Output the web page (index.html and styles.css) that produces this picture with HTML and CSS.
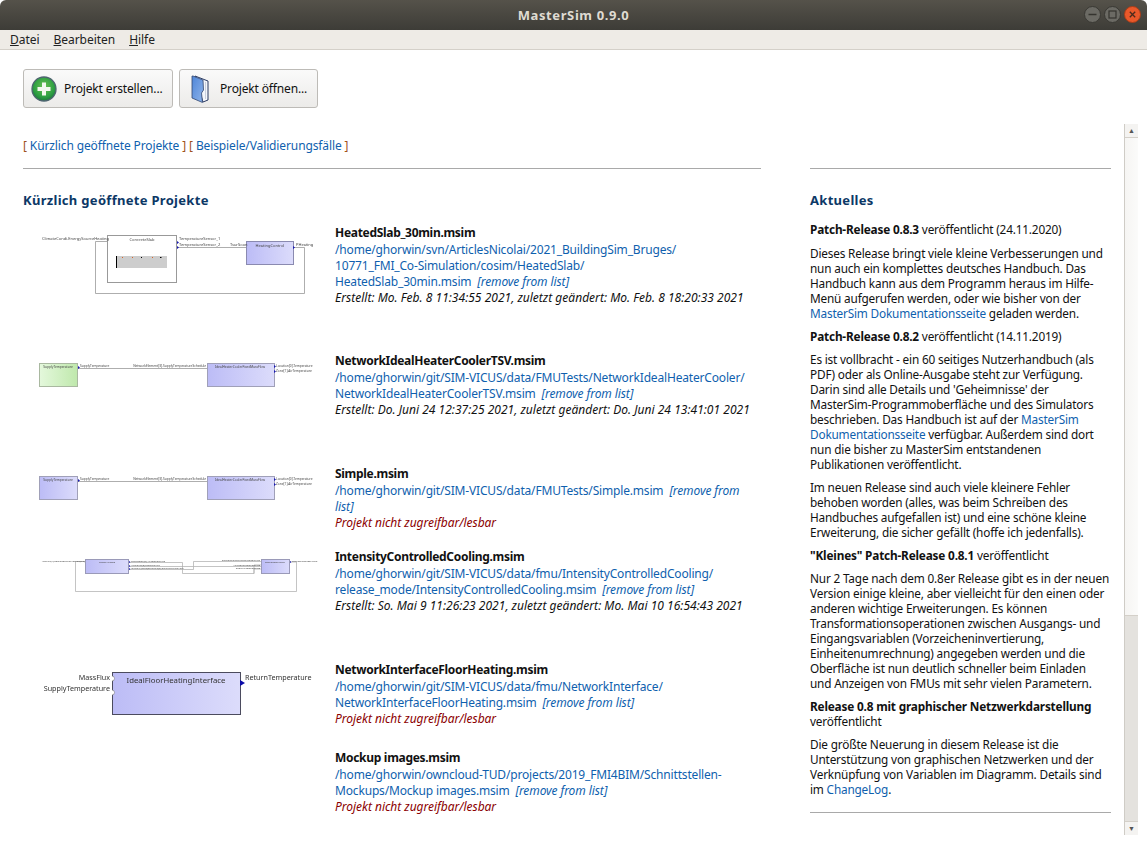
FILE: index.html
```html
<!DOCTYPE html>
<html>
<head>
    <meta charset="UTF-8">
    <title>MasterSim 0.9.0</title>
    <link rel="stylesheet" href="styles.css">
</head>
<body>
<div class="titlebar">
    <span class="title">MasterSim 0.9.0</span>
    <div class="winbuttons">
        <svg class="winbtn" width="17" height="17" viewBox="0 0 17 17"><circle cx="8.5" cy="8.5" r="8" fill="#6b6a64" stroke="#3a3934"/><path d="M4.5 8.5h8" stroke="#35342f" stroke-width="1.5"/></svg>
        <svg class="winbtn" width="17" height="17" viewBox="0 0 17 17"><circle cx="8.5" cy="8.5" r="8" fill="#6b6a64" stroke="#3a3934"/><rect x="5" y="5" width="7" height="7" fill="none" stroke="#35342f" stroke-width="1.2"/></svg>
        <svg class="winbtn" width="17" height="17" viewBox="0 0 17 17"><circle cx="8.5" cy="8.5" r="8" fill="#e9582a" stroke="#a83d18"/><path d="M5.8 5.8l5.4 5.4M11.2 5.8l-5.4 5.4" stroke="#4a2a1c" stroke-width="1.3"/></svg>
    </div>
</div>
<div class="menubar">
    <span class="menu"><u>D</u>atei</span>
    <span class="menu"><u>B</u>earbeiten</span>
    <span class="menu"><u>H</u>ilfe</span>
</div>
<div class="toolbar">
    <button class="toolbtn btn-new">
        <svg width="26" height="26" viewBox="0 0 26 26">
            <defs><radialGradient id="greenball" cx="50%" cy="40%" r="60%"><stop offset="0" stop-color="#6cc04f"/><stop offset="0.7" stop-color="#2ea043"/><stop offset="1" stop-color="#1c7a3a"/></radialGradient></defs>
            <circle cx="13" cy="13" r="12" fill="url(#greenball)" stroke="#4f6570" stroke-width="1.3"/>
            <path d="M13 6.500v13M6.500 13h13" stroke="#f2f8ee" stroke-width="4"/>
        </svg>
        <span>Projekt erstellen...</span>
    </button>
    <button class="toolbtn btn-open">
        <svg width="18" height="28" viewBox="0 0 18 28">
            <path d="M4 1 L17 6 L17 25 L12 27 Z" fill="#f4f6fa" stroke="#2d3c63" stroke-width="1"/>
            <path d="M14.500 7 V24" stroke="#c9d0de"/>
            <path d="M1 1 Q1 1 2 1 L12 5 L12.500 15 L10.500 18 L11.500 27.500 L1 23 Z" fill="url(#cover)" stroke="#33466f" stroke-width="0.8"/>
        </svg>
        <span>Projekt öffnen...</span>
    </button>
</div>
<div class="browser">
    <div class="content">
        <div class="tabs">
            <span class="bracket">[</span> <a>Kürzlich geöffnete Projekte</a> <span class="bracket">]</span>
            <span class="bracket">[</span> <a>Beispiele/Validierungsfälle</a> <span class="bracket">]</span>
        </div>
        <div class="columns">
            <div class="projects">
                <hr>
                <h2>Kürzlich geöffnete Projekte</h2>
                <div class="project-list">
                    <svg class="thumb" viewBox="23 225 312 128">
                        <rect x="107.500" y="235.500" width="69" height="47" fill="#fff" stroke="#999"/>
                        <rect x="116" y="256" width="51" height="12" fill="#cdcdcd"/>
                        <path d="M116.500 256v12" stroke="#000"/>
                        <path d="M122 257.500h1M132 257.500h1M152 257.500h1" stroke="#d9662a"/>
                        <path d="M141 257.500h1M160 257.500h1.500" stroke="#000"/>
                        <rect x="246.500" y="241.500" width="47" height="23" fill="url(#blue1)" stroke="#8a8ab0"/>
                        <path d="M177 247.500H246M293 247.500H304.500V293.500H95.500V241.500H107" fill="none" stroke="#999" stroke-width="0.8"/>
                        <path d="M177 241v3l2-1.500zM177 246v3l2-1.500zM293 246v3l2-1.500z" fill="#1a1ab0"/>
                        <text x="42" y="240" class="t4">ClimateCondi.EnergySourceHeating</text>
                        <text x="142" y="241" class="t4" text-anchor="middle">ConcreteSlab</text>
                        <text x="179" y="240" class="t4">TemperatureSensor_1</text>
                        <text x="179" y="246" class="t4">TemperatureSensor_2</text>
                        <text x="230" y="246" class="t4">TsurSoon</text>
                        <text x="270" y="247" class="t4" text-anchor="middle">HeatingControl</text>
                        <text x="296" y="246" class="t4">PHeating</text>
                    </svg>
                    <div class="project">
                        <div class="pname">HeatedSlab_30min.msim</div>
                        <a>/home/ghorwin/svn/ArticlesNicolai/2021_BuildingSim_Bruges/<br>10771_FMI_Co-Simulation/cosim/HeatedSlab/<br>HeatedSlab_30min.msim</a> <a class="remove">[remove from list]</a>
                        <div class="meta">Erstellt: Mo. Feb. 8 11:34:55 2021, zuletzt geändert: Mo. Feb. 8 18:20:33 2021</div>
                    </div>

                    <svg class="thumb" viewBox="23 353 312 113">
                        <rect x="39.500" y="363.500" width="38" height="23" fill="url(#green1)" stroke="#a9b8a0"/>
                        <rect x="207.500" y="363.500" width="67" height="23" fill="url(#blue1)" stroke="#a0a0b8"/>
                        <path d="M78 368.500H207" stroke="#999" stroke-width="0.8"/>
                        <path d="M78 366v3l2-1.500zM274 365v3l2-1.500zM274 370v3l2-1.500z" fill="#1a1ab0"/>
                        <text x="58" y="367.500" class="t3" text-anchor="middle">SupplyTemperature</text>
                        <text x="80" y="367" class="t3">SupplyTemperature</text>
                        <text x="206" y="367" class="t3" text-anchor="end">NetworkElement[3].SupplyTemperatureSchedule</text>
                        <text x="240" y="367.500" class="t3" text-anchor="middle">IdealHeaterCoolerFixedMassFlow</text>
                        <text x="276" y="367" class="t3">Location[0].Temperature</text>
                        <text x="276" y="372" class="t3">Zone[1].AirTemperature</text>
                    </svg>
                    <div class="project">
                        <div class="pname">NetworkIdealHeaterCoolerTSV.msim</div>
                        <a>/home/ghorwin/git/SIM-VICUS/data/FMUTests/NetworkIdealHeaterCooler/<br>NetworkIdealHeaterCoolerTSV.msim</a> <a class="remove">[remove from list]</a>
                        <div class="meta">Erstellt: Do. Juni 24 12:37:25 2021, zuletzt geändert: Do. Juni 24 13:41:01 2021</div>
                    </div>

                    <svg class="thumb" viewBox="23 466 312 83">
                        <rect x="39.500" y="476.500" width="38" height="23" fill="url(#blue1)" stroke="#a0a0b8"/>
                        <rect x="207.500" y="476.500" width="67" height="23" fill="url(#blue1)" stroke="#a0a0b8"/>
                        <path d="M78 481.500H207" stroke="#999" stroke-width="0.8"/>
                        <path d="M78 479v3l2-1.500zM274 478v3l2-1.500zM274 483v3l2-1.500z" fill="#1a1ab0"/>
                        <text x="58" y="480.500" class="t3" text-anchor="middle">SupplyTemperature</text>
                        <text x="80" y="480" class="t3">SupplyTemperature</text>
                        <text x="206" y="480" class="t3" text-anchor="end">NetworkElement[3].SupplyTemperatureSchedule</text>
                        <text x="240" y="480.500" class="t3" text-anchor="middle">IdealHeaterCoolerFixedMassFlow</text>
                        <text x="276" y="480" class="t3">Location[0].Temperature</text>
                        <text x="276" y="485" class="t3">Zone[1].AirTemperature</text>
                    </svg>
                    <div class="project">
                        <div class="pname">Simple.msim</div>
                        <a>/home/ghorwin/git/SIM-VICUS/data/FMUTests/Simple.msim</a> <a class="remove">[remove from<br>list]</a>
                        <div class="error">Projekt nicht zugreifbar/lesbar</div>
                    </div>

                    <svg class="thumb" viewBox="23 549 312 113">
                        <rect x="85.500" y="559.500" width="43" height="14" fill="url(#blue1)" stroke="#9a9ab8"/>
                        <rect x="261.500" y="559.500" width="28" height="14" fill="url(#blue1)" stroke="#9a9ab8"/>
                        <path d="M85 561.500H75.500V591.500H296.500V562H290" fill="none" stroke="#aaa" stroke-width="0.7"/>
                        <path d="M129 562.500H182.500V573.500H254V565H261M129 566.500H193.500V561.500H261M129 569.500H193.500V566.500H261M254 573.500V569H261" fill="none" stroke="#aaa" stroke-width="0.7"/>
                        <path d="M129 561v2l1.500-1zM129 565v2l1.500-1zM129 568v2l1.500-1zM290 561v2l1.500-1z" fill="#1a1ab0"/>
                        <text x="85" y="562" class="t2" text-anchor="end">HeatIoT[1].CoolingSystemHeating[5/6]</text>
                        <text x="107" y="563" class="t2" text-anchor="middle">IndoorAirZone</text>
                        <text x="131" y="562" class="t2">RoomTemp[0].AirTemperature</text>
                        <text x="131" y="566" class="t2">AmbientS[0].Temperature</text>
                        <text x="131" y="569" class="t2">Intensity[Zone]Schedule[0].SolarRadiationHeat</text>
                        <text x="260" y="561" class="t2" text-anchor="end">SolarRadiationIntensityOnGlazing</text>
                        <text x="260" y="566" class="t2" text-anchor="end">ActiveZoneTemperature</text>
                        <text x="260" y="569" class="t2" text-anchor="end">RoomAirTemperature</text>
                        <text x="275" y="563" class="t2" text-anchor="middle">CoolingController</text>
                        <text x="292" y="562" class="t2">CoolingPowerSetValue</text>
                    </svg>
                    <div class="project">
                        <div class="pname">IntensityControlledCooling.msim</div>
                        <a>/home/ghorwin/git/SIM-VICUS/data/fmu/IntensityControlledCooling/<br>release_mode/IntensityControlledCooling.msim</a> <a class="remove">[remove from list]</a>
                        <div class="meta">Erstellt: So. Mai 9 11:26:23 2021, zuletzt geändert: Mo. Mai 10 16:54:43 2021</div>
                    </div>

                    <svg class="thumb" viewBox="23 662 312 88">
                        <rect x="112.500" y="672.500" width="128" height="42" fill="url(#blue1)" stroke="#4b4b5e"/>
                        <path d="M112 676a2 2 0 0 1 0 5M112 690a2.500 2.500 0 0 1 0 5" fill="#fff" stroke="#777" stroke-width="0.6"/>
                        <path d="M240 680v6l5-3z" fill="#0b0ba8"/>
                        <text x="110" y="680" class="t8" text-anchor="end">MassFlux</text>
                        <text x="110" y="691" class="t8" text-anchor="end">SupplyTemperature</text>
                        <text x="176" y="683" class="t9" text-anchor="middle">IdealFloorHeatingInterface</text>
                        <text x="245" y="680" class="t8">ReturnTemperature</text>
                    </svg>
                    <div class="project">
                        <div class="pname">NetworkInterfaceFloorHeating.msim</div>
                        <a>/home/ghorwin/git/SIM-VICUS/data/fmu/NetworkInterface/<br>NetworkInterfaceFloorHeating.msim</a> <a class="remove">[remove from list]</a>
                        <div class="error">Projekt nicht zugreifbar/lesbar</div>
                    </div>

                    <div class="thumb"></div>
                    <div class="project">
                        <div class="pname">Mockup images.msim</div>
                        <a>/home/ghorwin/owncloud-TUD/projects/2019_FMI4BIM/Schnittstellen-<br>Mockups/Mockup images.msim</a> <a class="remove">[remove from list]</a>
                        <div class="error">Projekt nicht zugreifbar/lesbar</div>
                    </div>
                </div>
            </div>
            <div class="news">
                <hr>
                <h2>Aktuelles</h2>
                <p class="first"><b>Patch-Release 0.8.3</b> veröffentlicht (24.11.2020)</p>
                <p>Dieses Release bringt viele kleine Verbesserungen und<br>nun auch ein komplettes deutsches Handbuch. Das<br>Handbuch kann aus dem Programm heraus im Hilfe-<br>Menü aufgerufen werden, oder wie bisher von der<br><a>MasterSim Dokumentationsseite</a> geladen werden.</p>
                <p><b>Patch-Release 0.8.2</b> veröffentlicht (14.11.2019)</p>
                <p>Es ist vollbracht - ein 60 seitiges Nutzerhandbuch (als<br>PDF) oder als Online-Ausgabe steht zur Verfügung.<br>Darin sind alle Details und 'Geheimnisse' der<br>MasterSim-Programmoberfläche und des Simulators<br>beschrieben. Das Handbuch ist auf der <a>MasterSim<br>Dokumentationsseite</a> verfügbar. Außerdem sind dort<br>nun die bisher zu MasterSim entstandenen<br>Publikationen veröffentlicht.</p>
                <p>Im neuen Release sind auch viele kleinere Fehler<br>behoben worden (alles, was beim Schreiben des<br>Handbuches aufgefallen ist) und eine schöne kleine<br>Erweiterung, die sicher gefällt (hoffe ich jedenfalls).</p>
                <p><b>"Kleines" Patch-Release 0.8.1</b> veröffentlicht</p>
                <p>Nur 2 Tage nach dem 0.8er Release gibt es in der neuen<br>Version einige kleine, aber vielleicht für den einen oder<br>anderen wichtige Erweiterungen. Es können<br>Transformationsoperationen zwischen Ausgangs- und<br>Eingangsvariablen (Vorzeicheninvertierung,<br>Einheitenumrechnung) angegeben werden und die<br>Oberfläche ist nun deutlich schneller beim Einladen<br>und Anzeigen von FMUs mit sehr vielen Parametern.</p>
                <p><b>Release 0.8 mit graphischer Netzwerkdarstellung</b><br>veröffentlicht</p>
                <p>Die größte Neuerung in diesem Release ist die<br>Unterstützung von graphischen Netzwerken und der<br>Verknüpfung von Variablen im Diagramm. Details sind<br>im <a>ChangeLog</a>.</p>
                <hr class="endline">
            </div>
        </div>
    </div>
    <div class="scrollbar">
        <div class="arrow">&#9650;</div>
        <div class="thumbbar"></div>
        <div class="trough"></div>
        <div class="arrow down">&#9660;</div>
    </div>
</div>
<svg class="defs" width="0" height="0">
    <defs>
        <linearGradient id="blue1"><stop offset="0" stop-color="#bcbcf6"/><stop offset="1" stop-color="#dcdcfb"/></linearGradient>
        <linearGradient id="green1"><stop offset="0" stop-color="#e4f8dc"/><stop offset="1" stop-color="#bfe8ac"/></linearGradient>
        <linearGradient id="cover" x2="1" y2="1"><stop offset="0" stop-color="#4f86d8"/><stop offset="1" stop-color="#8fb4ea"/></linearGradient>
    </defs>
</svg>
</body>
</html>
```

FILE: styles.css
```css
html, body {
    margin: 0;
    height: 844px;
    overflow: hidden;
}
body {
    display: flex;
    flex-direction: column;
    background: #fff;
    color: #111;
    font-family: "Noto Sans", sans-serif;
    font-size: 12px;
}
a {
    color: #0f5fae;
}
.defs {
    position: absolute;
}

.titlebar {
    height: 30px;
    flex: none;
    display: flex;
    align-items: center;
    justify-content: center;
    position: relative;
    border-radius: 6px 6px 0 0;
    background: linear-gradient(#55524a, #3d3c37);
}
.title {
    color: #dfdbd2;
    font-weight: 700;
    font-size: 13px;
    letter-spacing: 0.6px;
}
.winbuttons {
    position: absolute;
    right: 6px;
    top: 6px;
    display: flex;
    gap: 3px;
}

.menubar {
    height: 19px;
    flex: none;
    display: flex;
    align-items: center;
    gap: 14px;
    padding-left: 10px;
    background: #eeebe6;
    border-bottom: 1px solid #d4d0c9;
    font-size: 12px;
    letter-spacing: -0.04px;
    color: #222;
}

.toolbar {
    height: 74px;
    flex: none;
    display: flex;
    gap: 6px;
    padding: 19px 0 0 23px;
    box-sizing: border-box;
}
.toolbtn {
    height: 39px;
    display: flex;
    align-items: center;
    padding: 0;
    border: 1px solid #bdbbb7;
    border-radius: 3px;
    background: linear-gradient(#fafafa, #ecebe9);
    font: 12px "Noto Sans", sans-serif;
    letter-spacing: -0.15px;
    color: #111;
}
.btn-new {
    width: 150px;
    gap: 7px;
    padding-left: 7px;
}
.btn-open {
    width: 139px;
    gap: 11px;
    padding-left: 11px;
}

.browser {
    flex: 1;
    display: flex;
    min-height: 0;
}
.content {
    width: 1124px;
    padding: 14px 0 0 23px;
    box-sizing: border-box;
    overflow: hidden;
}
.tabs {
    height: 16px;
    line-height: 16px;
    letter-spacing: -0.12px;
}
.bracket {
    color: #a0521c;
}
.columns {
    display: flex;
    gap: 49px;
    margin-top: 14px;
}
hr {
    margin: 0;
    border: 0;
    border-top: 1px solid #a9a9a9;
}
h2 {
    margin: 23px 0 16px;
    font-size: 13px;
    line-height: 16px;
    letter-spacing: 0.3px;
    color: #0c3866;
}
.projects {
    width: 738px;
    flex: none;
}
.news {
    width: 301px;
    flex: none;
    font-size: 11.800px;
    line-height: 15px;
    letter-spacing: -0.18px;
    white-space: nowrap;
}
.news h2 {
    margin-bottom: 15px;
}
.news p {
    margin: 0 0 8px;
}
.news .first {
    margin: -1px 0 9px;
}
.endline {
    margin-top: 15px;
}

.project-list {
    display: grid;
    grid-template-columns: 312px 1fr;
    grid-template-rows: 128px 113px 83px 113px 88px 80px;
    line-height: 16px;
    letter-spacing: -0.17px;
    white-space: nowrap;
}
.thumb {
    width: 312px;
    height: 100%;
    margin-top: 1px;
    filter: blur(0.4px);
}
.pname {
    font-weight: 700;
    line-height: 18px;
    letter-spacing: -0.3px;
}
.remove {
    font-style: italic;
    margin-left: 3px;
    letter-spacing: -0.1px;
}
.meta {
    font-style: italic;
    letter-spacing: 0.02px;
}
.error {
    font-style: italic;
    letter-spacing: -0.03px;
    color: #8b0000;
}

.t2, .t3, .t4, .t8, .t9 {
    letter-spacing: 0;
}
.t2, .t3, .t4 {
    fill: #444;
}
.t8, .t9 {
    fill: #333;
}
.t2 { font-size: 2.400px; }
.t3 { font-size: 3.200px; }
.t4 { font-size: 4px; }
.t8 { font-size: 7.200px; }
.t9 { font-size: 7.800px; }

.scrollbar {
    width: 14px;
    height: 711px;
    flex: none;
    display: flex;
    flex-direction: column;
    border-left: 1px solid #cfccc6;
    box-sizing: border-box;
}
.arrow {
    height: 13px;
    flex: none;
    font-size: 7px;
    line-height: 13px;
    text-align: center;
    color: #555;
    background: #f4f3f1;
    border-bottom: 1px solid #d4d0c9;
}
.arrow.down {
    border-bottom: 0;
    border-top: 1px solid #d4d0c9;
}
.thumbbar {
    height: 477px;
    flex: none;
    background: linear-gradient(90deg, #f6f5f3, #fbfbfa);
}
.trough {
    flex: 1;
    background: #e4e2de;
    border-top: 1px solid #d4d0c9;
}
```
